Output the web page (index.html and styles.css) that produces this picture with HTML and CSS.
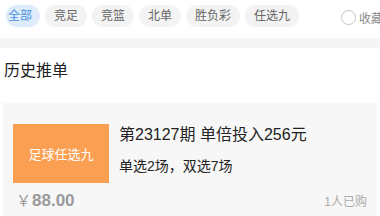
FILE: index.html
```html
<!DOCTYPE html>
<html lang="zh">
<head>
<meta charset="utf-8">
<link rel="stylesheet" href="styles.css">
</head>
<body>
<div class="tabs">
  <span class="pill pill-active">全部</span>
  <span class="pill">竞足</span>
  <span class="pill">竞篮</span>
  <span class="pill">北单</span>
  <span class="pill">胜负彩</span>
  <span class="pill">任选九</span>
  <span class="fav"><span class="radio"></span><span class="fav-text">收藏</span></span>
</div>
<div class="divider"></div>
<div class="section-title">历史推单</div>
<div class="card">
  <div class="card-main">
    <div class="badge">足球任选九</div>
    <div class="info">
      <div class="title">第23127期 单倍投入256元</div>
      <div class="sub">单选2场，双选7场</div>
    </div>
  </div>
  <div class="card-foot">
    <div class="price"><span class="yen">￥</span><span class="amount">88.00</span></div>
    <div class="buyers">1人已购</div>
  </div>
</div>
</body>
</html>
```
FILE: styles.css
```css
html, body {
  margin: 0;
  padding: 0;
  background: #ffffff;
  font-family: "Liberation Sans", "Noto Sans CJK SC", sans-serif;
  width: 380px;
  height: 216px;
  overflow: hidden;
}
.tabs {
  height: 38px;
  box-sizing: border-box;
  padding: 5px 0 0 6px;
  display: flex;
  align-items: flex-start;
  gap: 5px;
  white-space: nowrap;
  overflow: hidden;
}
.pill {
  flex: none;
  height: 22px;
  line-height: 22px;
  padding: 0 9px;
  border-radius: 11px;
  background: #f3f3f3;
  color: #666666;
  font-size: 12px;
}
.pill-active {
  padding: 0 8px 0 2px;
  background: #deecfa;
  color: #4a90e2;
}
.fav {
  flex: none;
  display: flex;
  align-items: center;
  height: 22px;
  margin-left: 37px;
  margin-top: 1px;
}
.radio {
  width: 13px;
  height: 13px;
  border: 1px solid #c4c4c4;
  border-radius: 50%;
  box-sizing: content-box;
}
.fav-text {
  margin-left: 3px;
  font-size: 12px;
  color: #888888;
}
.divider {
  height: 10px;
  background: #f5f5f5;
}
.section-title {
  height: 55px;
  box-sizing: border-box;
  padding: 13px 0 0 4px;
  font-size: 16px;
  line-height: 20px;
  color: #222222;
}
.card {
  margin: 0 3px;
  background: #f7f7f7;
  padding: 21px 10px 10px 10px;
}
.card-main {
  display: flex;
  gap: 10px;
}
.badge {
  flex: none;
  width: 96px;
  height: 59px;
  background: #fba052;
  color: #ffffff;
  font-size: 13px;
  display: flex;
  align-items: center;
  justify-content: center;
}
.info {
  padding-top: 1px;
}
.title {
  font-size: 16px;
  line-height: 20px;
  color: #222222;
}
.sub {
  margin-top: 11px;
  font-size: 14px;
  line-height: 20px;
  color: #222222;
}
.card-foot {
  display: flex;
  justify-content: space-between;
  align-items: center;
  margin-top: 7px;
  height: 20px;
}
.price {
  padding-left: 3px;
  color: #9a9a9a;
  display: flex;
  align-items: baseline;
}
.yen {
  font-size: 15px;
}
.amount {
  font-size: 17px;
  font-weight: bold;
  margin-left: 1px;
}
.buyers {
  font-size: 12px;
  color: #aaaaaa;
}
```
